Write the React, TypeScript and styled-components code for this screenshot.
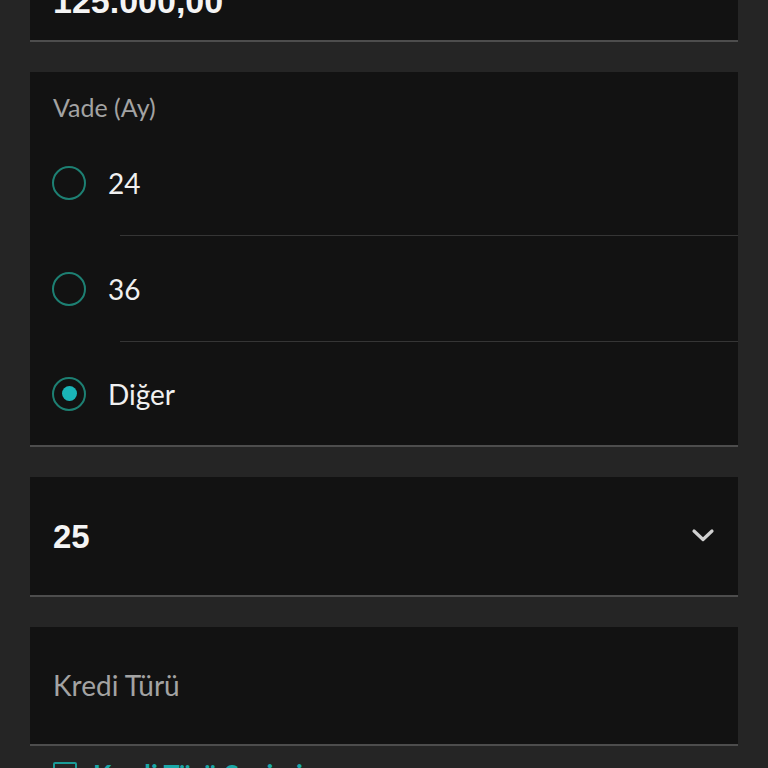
import React from "react";
import styled, { createGlobalStyle } from "styled-components";

const Global = createGlobalStyle`
  html, body { margin: 0; padding: 0; background: #252525; }
  body { font-family: Lato, "Open Sans", sans-serif; overflow: hidden; }
`;

const Page = styled.div`
  display: flex;
  flex-direction: column;
  gap: 30px;
  padding: 0 30px;
  margin-top: -80px;
`;

const Card = styled.div<{ $h?: number }>`
  background: #121212;
  border-bottom: 2px solid #4d4d4d;
  box-sizing: border-box;
  ${(p) => (p.$h ? `height: ${p.$h}px;` : "")}
  display: flex;
  flex-direction: column;
`;

const ValueCard = styled(Card)`
  flex-direction: row;
  align-items: center;
  justify-content: space-between;
  padding: 0 22px 0 23px;
`;

const BigValue = styled.div<{ $size: number }>`
  font-family: "Liberation Sans", Arial, sans-serif;
  font-weight: 700;
  font-size: ${(p) => p.$size}px;
  color: #f4f4f4;
  line-height: 1;
`;

const TopValue = styled(BigValue)`
  align-self: flex-end;
  margin-bottom: 22px;
`;

const Label = styled.div<{ $size: number }>`
  font-size: ${(p) => p.$size}px;
  color: #a3a3a3;
  line-height: 1.2;
`;

const GroupLabel = styled(Label)`
  padding: 20px 23px 8px;
`;

const Row = styled.div<{ $last?: boolean }>`
  display: flex;
  align-items: center;
  height: ${(p) => (p.$last ? 103 : 106)}px;
  padding-left: 22px;
  gap: 22px;
  position: relative;
  ${(p) =>
    p.$last
      ? ""
      : `&::after { content: ""; position: absolute; left: 90px; right: 0; bottom: 0; height: 1px; background: #353535; }`}
`;

const Radio = styled.span<{ $on?: boolean }>`
  width: 34px;
  height: 34px;
  box-sizing: border-box;
  border: 2px solid #1d8073;
  border-radius: 50%;
  display: flex;
  align-items: center;
  justify-content: center;
  &::before {
    content: "";
    width: 15px;
    height: 15px;
    border-radius: 50%;
    background: ${(p) => (p.$on ? "#1ab5b8" : "transparent")};
  }
`;

const RowText = styled.span`
  font-size: 28px;
  color: #f0f0f0;
`;

const KrediCard = styled(Card)`
  justify-content: center;
  padding: 0 23px;
`;

const LinkRow = styled.div`
  display: flex;
  align-items: flex-start;
  gap: 16px;
  padding: 16px 23px 0;
  margin-top: -30px;
`;

const Box = styled.span`
  width: 24px;
  height: 24px;
  flex: none;
  box-sizing: border-box;
  border: 2px solid #1a9c98;
  border-radius: 2px;
`;

const LinkText = styled.span`
  font-size: 27px;
  font-weight: 700;
  color: #1aa8a8;
  line-height: 1;
  margin-top: -2px;
`;

const options = [
  { v: "24", on: false },
  { v: "36", on: false },
  { v: "Diğer", on: true },
];

export default function App() {
  return (
    <>
      <Global />
      <Page>
        <ValueCard $h={122}>
          <TopValue $size={34}>125.000,00</TopValue>
        </ValueCard>
        <Card $h={375}>
          <GroupLabel $size={25}>Vade (Ay)</GroupLabel>
          {options.map((o, i) => (
            <Row key={o.v} $last={i === options.length - 1}>
              <Radio $on={o.on} />
              <RowText>{o.v}</RowText>
            </Row>
          ))}
        </Card>
        <ValueCard $h={120}>
          <BigValue $size={33}>25</BigValue>
          <svg width="26" height="16" viewBox="0 0 26 16">
            <path d="M4 3 L13 11.5 L22 3" fill="none" stroke="#d0d0d0" strokeWidth="3.2" strokeLinecap="round" strokeLinejoin="round" />
          </svg>
        </ValueCard>
        <KrediCard $h={119}>
          <Label $size={28}>Kredi Türü</Label>
        </KrediCard>
        <LinkRow>
          <Box />
          <LinkText>Kredi Türü Seçimi</LinkText>
        </LinkRow>
      </Page>
    </>
  );
}
